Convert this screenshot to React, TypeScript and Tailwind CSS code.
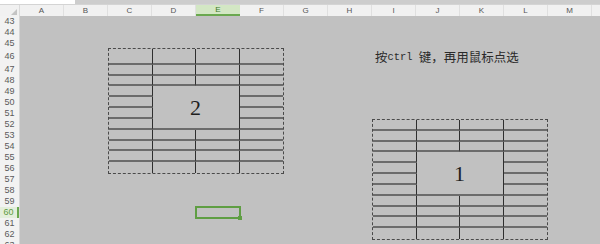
import React from "react";
import clsx from "clsx";

const COLS = ["A", "B", "C", "D", "E", "F", "G", "H", "I", "J", "K", "L", "M"];
const ROWS: { n: number; h: string }[] = [
  { n: 43, h: "h-[11px]" },
  { n: 44, h: "h-[11px]" },
  { n: 45, h: "h-[10px]" },
  { n: 46, h: "h-[16px]" },
  ...Array.from({ length: 16 }, (_, i) => ({ n: 47 + i, h: "h-[11px]" })),
  { n: 63, h: "h-[11px]" },
];

function Table({ label, tall }: { label: string; tall?: boolean }) {
  const cells: React.ReactNode[] = [];
  for (let r = 1; r <= 11; r++) {
    for (let c = 1; c <= 4; c++) {
      const inMerge = r >= 4 && r <= 7 && c >= 2 && c <= 3;
      if (inMerge && !(r === 4 && c === 2)) continue;
      const anchor = r === 4 && c === 2;
      cells.push(
        <div
          key={`${r}-${c}`}
          className={clsx(
            "box-border",
            anchor && "col-span-2 row-span-4 flex items-center justify-center",
            c < 4 && "border-r border-r-[#2f2f2f]",
            (anchor || r < 11) && "border-b-2 border-b-[#6c6c6c]"
          )}
        >
          {anchor && (
            <span className="font-['Liberation_Serif',serif] text-[22px] leading-none text-[#1e1e1e] mt-[2px]">
              {label}
            </span>
          )}
        </div>
      );
    }
  }
  return (
    <div
      className={clsx(
        "grid grid-cols-4 border border-dashed border-[#4a4a4a] box-border",
        tall ? "grid-rows-[16fr_repeat(10,11fr)]" : "grid-rows-[repeat(11,1fr)]"
      )}
    >
      {cells}
    </div>
  );
}

export default function App() {
  return (
    <div className="w-[600px] h-[244px] overflow-hidden flex flex-col bg-[#c1c1c1] font-['Liberation_Sans',sans-serif]">
      {/* top strip */}
      <div className="h-[4px] flex shrink-0">
        <div className="w-[75px] bg-white" />
        <div className="flex-1 bg-[#cdcdcd]" />
      </div>
      {/* column header */}
      <div className="h-[11px] flex shrink-0 bg-[#f1f1f1] border-t border-[#d4d4d4] box-content">
        <div className="w-[20px] relative border-r border-[#dadada] box-border">
          <svg className="absolute right-[2px] bottom-[1px]" width="6" height="6" viewBox="0 0 6 6">
            <polygon points="0,6 6,6 6,0" fill="#c4c4c4" />
          </svg>
        </div>
        {COLS.map((c) =>
          c === "E" ? (
            <div
              key={c}
              className="w-[44px] shrink-0 box-border flex items-center justify-center text-[8px] leading-none text-[#3f7a2a] bg-[#d3e7c4] border-b-2 border-[#6aa84f]"
            >
              {c}
            </div>
          ) : (
            <div
              key={c}
              className="w-[44px] shrink-0 box-border flex items-center justify-center text-[8px] leading-none text-[#555] border-r border-[#e0e0e0]"
            >
              {c}
            </div>
          )
        )}
        <div className="flex-1" />
      </div>
      {/* body */}
      <div className="flex flex-1 min-h-0">
        <div className="w-[20px] shrink-0 flex flex-col bg-[#f2f2f2] border-r border-[#d6d6d6] box-border">
          {ROWS.map((r) => (
            <div
              key={r.n}
              className={clsx(
                r.h,
                "shrink-0 flex items-center justify-center text-[9px] leading-none box-border",
                r.n === 60
                  ? "text-[#5d9a40] bg-[#e3eedb] border-r-2 border-[#6aa84f]"
                  : "text-[#5a5a5a]"
              )}
            >
              {r.n}
            </div>
          ))}
        </div>
        <div className="flex-1 bg-[#c1c1c1] grid grid-cols-[repeat(13,44px)_1fr] grid-rows-[11px_11px_10px_16px_repeat(16,11px)_1fr]">
          <div className="col-start-3 col-end-7 row-start-4 row-end-15 grid">
            <Table label="2" tall />
          </div>
          <div className="col-start-9 col-end-13 row-start-10 row-end-21 grid">
            <Table label="1" />
          </div>
          <div className="col-start-9 col-end-14 row-start-4 flex items-center pl-[3px] pt-[3px] whitespace-nowrap text-[12.5px] leading-none text-[#2a2a2a] font-['Noto_Sans_CJK_SC',sans-serif]">
            <span>按</span>
            <span className="font-['Liberation_Mono',monospace] text-[10.4px]">ctrl&nbsp;</span>
            <span>键，再用鼠标点选</span>
          </div>
          <div className="col-start-5 row-start-18 relative">
            <div className="absolute -left-px -top-px -right-px -bottom-px border-2 border-[#5f9e43]" />
            <div className="absolute -right-[2px] -bottom-[2px] w-[4px] h-[4px] bg-[#5f9e43]" />
          </div>
        </div>
      </div>
    </div>
  );
}
